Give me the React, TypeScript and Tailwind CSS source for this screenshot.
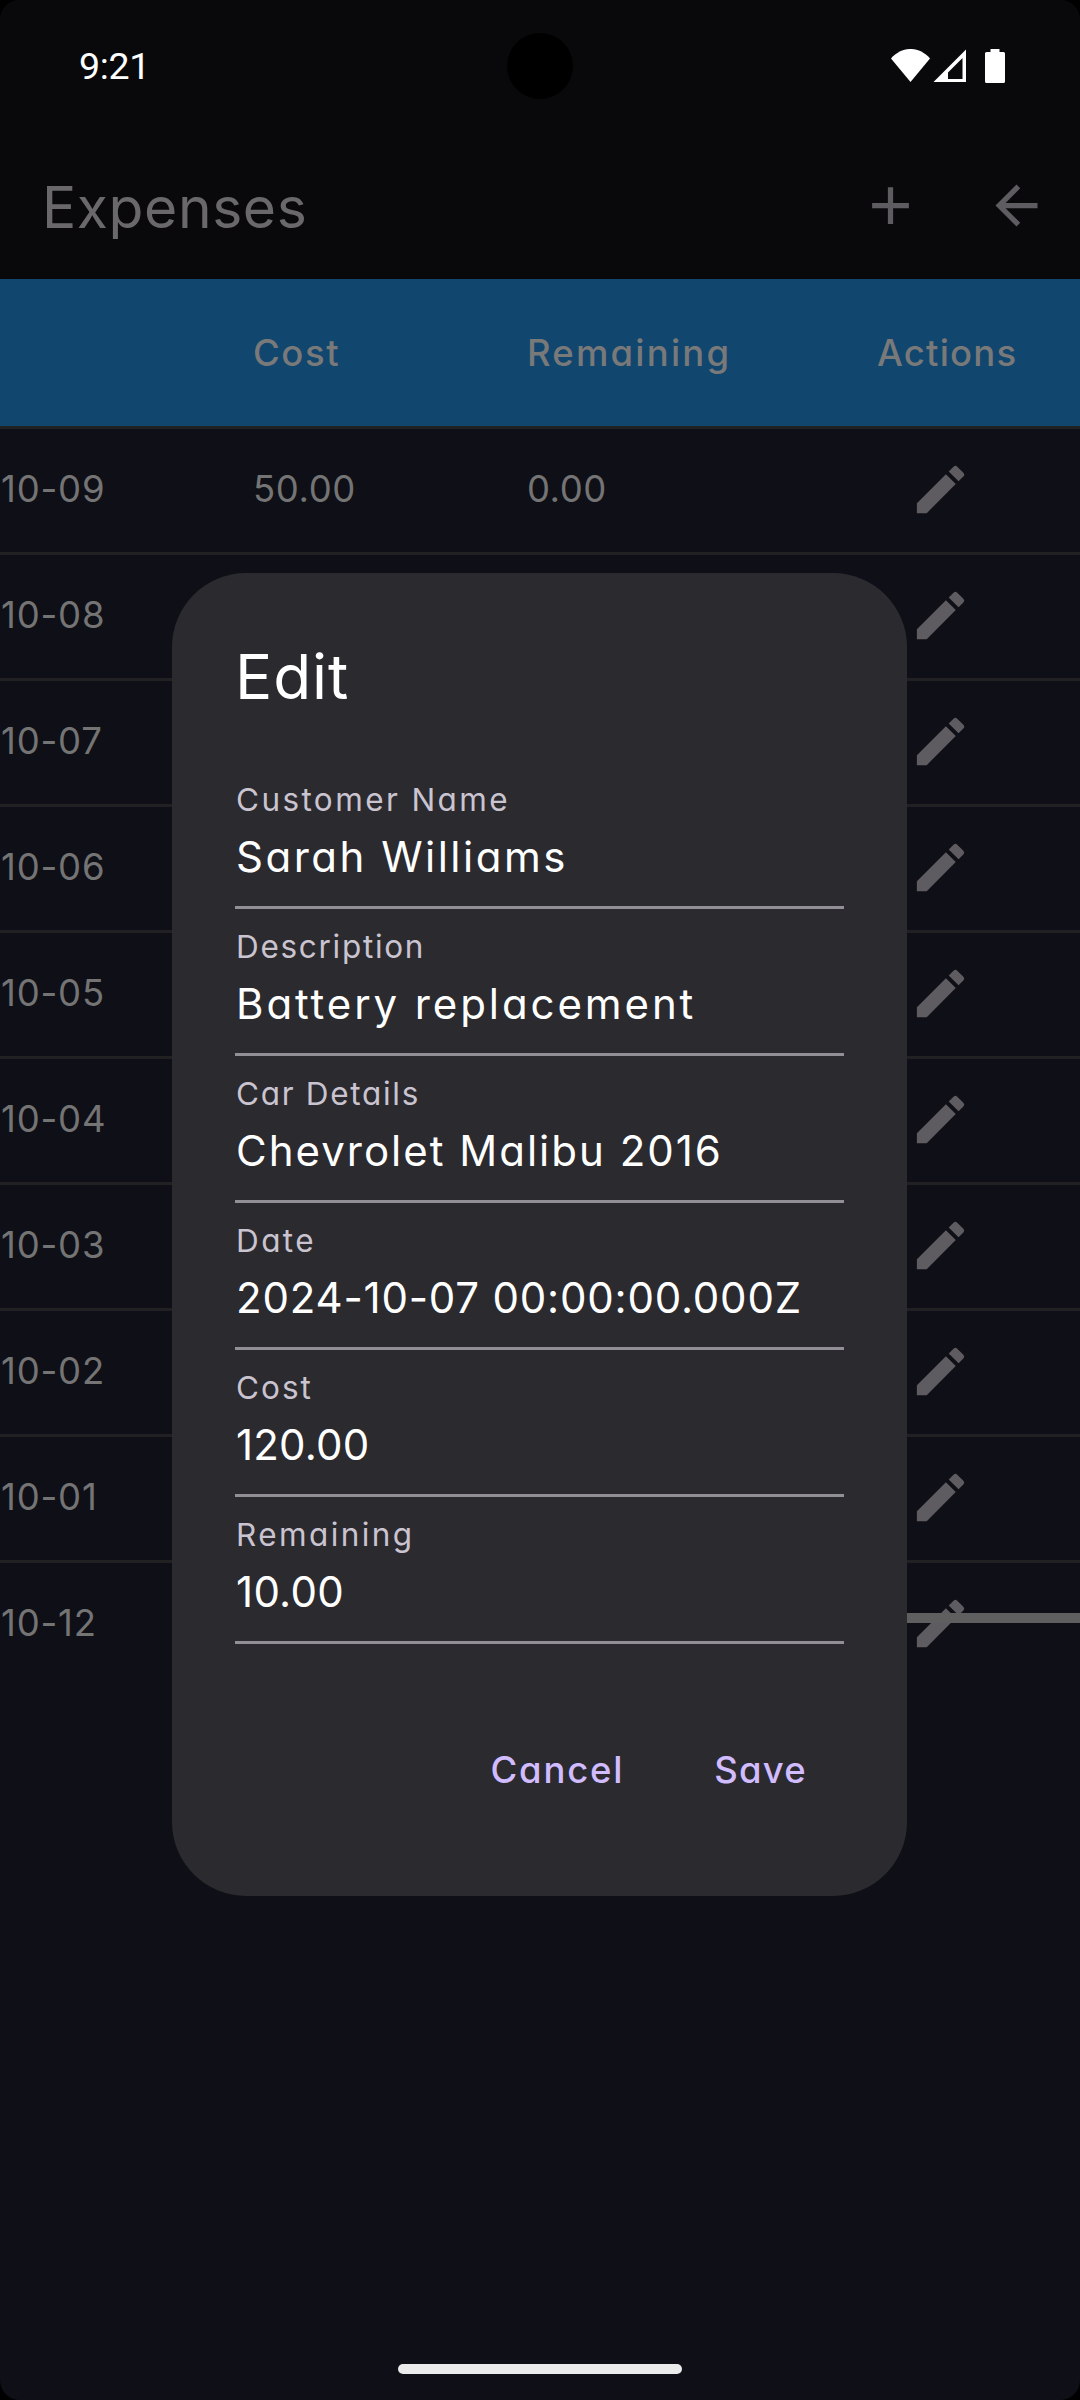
import { MdAdd, MdArrowBack, MdEdit } from "react-icons/md";

const ROWS = [
  { date: "10-09", cost: "50.00", remaining: "0.00" },
  { date: "10-08" },
  { date: "10-07" },
  { date: "10-06" },
  { date: "10-05" },
  { date: "10-04" },
  { date: "10-03" },
  { date: "10-02" },
  { date: "10-01" },
  { date: "10-12" },
];

const FIELDS = [
  { label: "Customer Name", value: "Sarah Williams", labelClass: "tracking-[2.4px]", valueClass: "tracking-[2.5px]" },
  { label: "Description", value: "Battery replacement", labelClass: "tracking-[1.7px]", valueClass: "tracking-[2.9px]" },
  { label: "Car Details", value: "Chevrolet Malibu 2016", labelClass: "tracking-[1.7px]", valueClass: "tracking-[2px]" },
  { label: "Date", value: "2024-10-07 00:00:00.000Z", labelClass: "tracking-[2.4px]", valueClass: "tracking-[0.8px]" },
  { label: "Cost", value: "120.00", labelClass: "tracking-[2px]", valueClass: "tracking-[0.2px]" },
  { label: "Remaining", value: "10.00", labelClass: "tracking-[2.4px]", valueClass: "tracking-[0.3px]" },
];

function StatusBar() {
  return (
    <div className="flex h-[132px] items-center justify-between pl-[79px] pr-[75px] text-white">
      <span className="pt-0.5 font-['Roboto',sans-serif] text-[37.5px] leading-none tracking-[-0.3px]">9:21</span>
      <svg width="114" height="34" viewBox="0 0 114 34" fill="currentColor">
        <path d="M0 9.5C11-3.2 28-3.2 39 9.5L19.5 33z" />
        <path fillRule="evenodd" d="M42.500 33 75 .5V33zM57 23.500V30H71.500V9z" />
        <path d="M99.500 0h9v3h4q1.500 0 1.500 1.500v28q0 1.500-1.500 1.500h-17q-1.500 0-1.500-1.500v-28q0-1.500 1.500-1.500h4z" />
      </svg>
    </div>
  );
}

function AppBar() {
  return (
    <header className="flex h-[147px] items-center justify-between pl-[42px] pr-8">
      <h1 className="pt-[3px] text-[57px] leading-none font-[370] tracking-[0.6px] text-[#6a686b]">Expenses</h1>
      <div className="flex items-center gap-[63px] text-[#5f5c61]">
        <MdAdd size={63} />
        <MdArrowBack size={63} />
      </div>
    </header>
  );
}

function ExpensesTable() {
  return (
    <div className="relative">
      <div className="grid h-[147px] grid-cols-[253px_274px_350px_1fr] items-center bg-[#11466f] text-[36.5px] font-[460] text-[#797979]">
        <span />
        <span className="pt-0.5 tracking-[1.6px]">Cost</span>
        <span className="pt-0.5 tracking-[2.2px]">Remaining</span>
        <span className="pt-0.5 tracking-[1.2px]">Actions</span>
      </div>
      {ROWS.map((row) => (
        <div
          key={row.date}
          className="grid h-[126px] grid-cols-[253px_274px_350px_1fr] items-center border-t-3 border-[#212124] text-[36.5px] leading-none font-[370] text-[#747474]"
        >
          <span className="pb-0.5 pl-px tracking-[0.8px]">{row.date}</span>
          <span className="pb-0.5 tracking-[0.6px]">{row.cost}</span>
          <span className="pb-0.5 tracking-[0.5px]">{row.remaining}</span>
          <MdEdit size={63} className="mb-[3px] ml-8 text-[#5f5c61]" />
        </div>
      ))}
      {/* horizontal scroll thumb over the last row */}
      <div className="absolute right-0 bottom-[63px] h-2.5 w-[560px] bg-[#5f5f5f]" />
    </div>
  );
}

function EditDialog() {
  return (
    <div
      role="dialog"
      className="absolute left-[172px] top-[573px] flex h-[1323px] w-[735px] flex-col rounded-[74px] bg-[#2b2a2f] px-[63px] pt-16"
    >
      <h2 className="text-[62px] leading-[80px] font-[370] tracking-[0.9px] text-white">Edit</h2>
      <div className="mt-[45px]">
        {FIELDS.map((field) => (
          <label key={field.label} className="block h-[147px] border-b-3 border-[#938f96] pt-3.5">
            <span className={`block pl-px text-[31.5px] leading-[48px] font-[370] text-[#cac4d0] ${field.labelClass}`}>
              {field.label}
            </span>
            <span className={`block pl-px text-[42px] leading-[66px] font-[370] whitespace-nowrap text-white ${field.valueClass}`}>
              {field.value}
            </span>
          </label>
        ))}
      </div>
      <div className="mt-[74px] flex h-[105px] items-center justify-end gap-[90px] pr-[37px] text-[36.5px] font-[460] text-[#d0bcff]">
        <button className="tracking-[1.8px]">Cancel</button>
        <button className="tracking-[1.2px]">Save</button>
      </div>
    </div>
  );
}

export default function App() {
  return (
    <div className="h-[2400px] w-[1080px] overflow-hidden bg-black">
      <div className="relative h-full overflow-hidden rounded-[20px] bg-[#0f0f17] font-['Inter','Open_Sans',sans-serif] [font-feature-settings:'cv11']">
        <div className="bg-[#09090b]">
          <StatusBar />
          <AppBar />
        </div>
        <ExpensesTable />
        <div className="absolute left-[507px] top-[33px] size-[66px] rounded-full bg-black" />
        <EditDialog />
        <div className="absolute bottom-[26px] left-[398px] h-2.5 w-[284px] rounded-full bg-[#ebebeb]" />
      </div>
    </div>
  );
}
